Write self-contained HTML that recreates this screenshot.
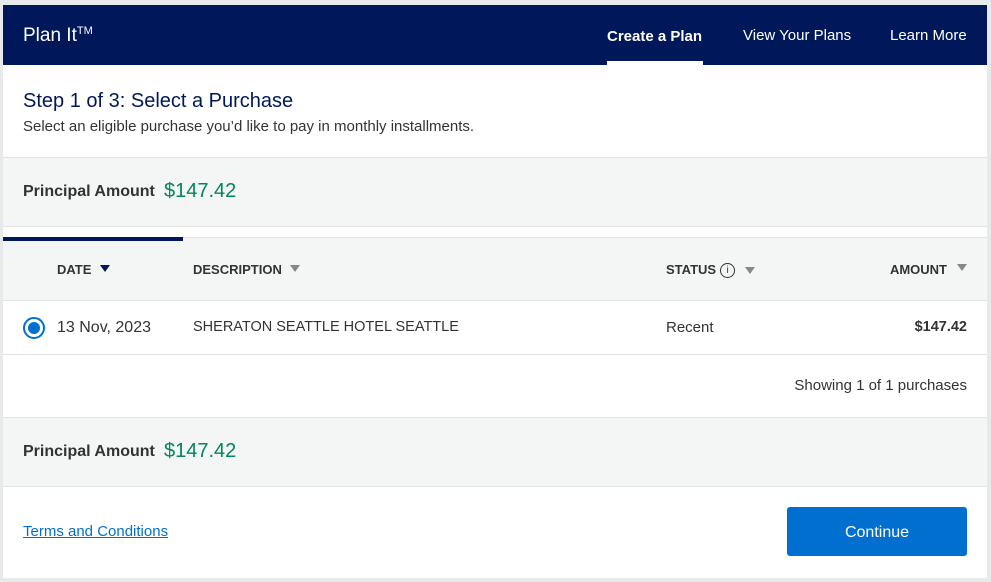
<!DOCTYPE html>
<html><head><style>
*{margin:0;padding:0;box-sizing:border-box}
body{width:991px;height:582px;background:#e8e9ea;font-family:"Liberation Sans",Arial,sans-serif;position:relative;overflow:hidden;color:#333}
.c{position:absolute;left:3px;top:5px;width:984px;height:573px;background:#fff}
.nav{position:absolute;left:0;top:0;width:984px;height:60px;background:#00175a;color:#fff}
.abs{position:absolute;white-space:nowrap}
.gray{position:absolute;left:0;width:984px;background:#f4f5f5;border-top:1px solid #e2e4e4;border-bottom:1px solid #e2e4e4}
.th{font-size:13px;font-weight:bold;color:#333;line-height:16px}
.tri{display:inline-block;width:0;height:0;border-left:5px solid transparent;border-right:5px solid transparent;border-top:7px solid #888;vertical-align:2px;margin-left:8px}
</style></head><body>
<div class="c">
 <div class="nav">
  <div class="abs" style="left:20px;top:20px;font-size:19px">Plan It<sup style="font-size:11px;vertical-align:7px">TM</sup></div>
  <div class="abs" style="left:604px;top:23px;font-size:15px;font-weight:bold">Create a Plan</div>
  <div style="position:absolute;left:604px;top:56px;width:96px;height:4px;background:#fff"></div>
  <div class="abs" style="left:740px;top:22px;font-size:15px">View Your Plans</div>
  <div class="abs" style="left:887px;top:22px;font-size:15px">Learn More</div>
 </div>
 <div class="abs" style="left:20px;top:85px;font-size:20px;color:#00175a">Step 1 of 3: Select a Purchase</div>
 <div class="abs" style="left:20px;top:113px;font-size:15px;color:#333">Select an eligible purchase you’d like to pay in monthly installments.</div>
 <div class="gray" style="top:152px;height:70px"></div>
 <div class="abs" style="left:20px;top:178px;font-size:16px;font-weight:bold">Principal Amount</div>
 <div class="abs" style="left:161px;top:175px;font-size:20px;color:#00855f">$147.42</div>
 <div class="gray" style="top:232px;height:64px"></div>
 <div style="position:absolute;left:0;top:232px;width:180px;height:4px;background:#00175a"></div>
 <div class="abs th" style="left:54px;top:257px">DATE<span class="tri" style="border-top-color:#00175a;margin-left:9px"></span></div>
 <div class="abs th" style="left:190px;top:257px">DESCRIPTION<span class="tri"></span></div>
 <div class="abs th" style="left:663px;top:257px;display:flex;align-items:center">STATUS<span style="display:inline-block;width:15px;height:15px;border:1px solid #333;border-radius:50%;font-size:10px;font-weight:normal;text-align:center;line-height:13px;margin-left:4px">i</span><span class="tri" style="margin-left:10px;vertical-align:0"></span></div>
 <div class="abs th" style="right:20px;top:257px">AMOUNT<span class="tri" style="margin-left:10px;vertical-align:3px"></span></div>
 <div style="position:absolute;left:20px;top:312px;width:22px;height:22px;border:2px solid #006fcf;border-radius:50%;background:#fff"><div style="position:absolute;left:3px;top:3px;width:12px;height:12px;border-radius:50%;background:#006fcf"></div></div>
 <div class="abs" style="left:54px;top:314px;font-size:16px">13 Nov, 2023</div>
 <div class="abs" style="left:190px;top:314px;font-size:14.5px">SHERATON SEATTLE HOTEL SEATTLE</div>
 <div class="abs" style="left:663px;top:314px;font-size:15px">Recent</div>
 <div class="abs" style="right:20px;top:314px;font-size:14.5px;font-weight:bold">$147.42</div>
 <div style="position:absolute;left:0;top:349px;width:984px;height:1px;background:#e2e4e4"></div>
 <div class="abs" style="right:20px;top:372px;font-size:15px">Showing 1 of 1 purchases</div>
 <div class="gray" style="top:412px;height:70px"></div>
 <div class="abs" style="left:20px;top:438px;font-size:16px;font-weight:bold">Principal Amount</div>
 <div class="abs" style="left:161px;top:435px;font-size:20px;color:#00855f">$147.42</div>
 <div class="abs" style="left:20px;top:518px;font-size:15px;color:#006fcf;text-decoration:underline">Terms and Conditions</div>
 <div style="position:absolute;left:784px;top:502px;width:180px;height:49px;background:#006fcf;border-radius:3px;color:#fff;font-size:16px;text-align:center;line-height:51px">Continue</div>
</div>
</body></html>
